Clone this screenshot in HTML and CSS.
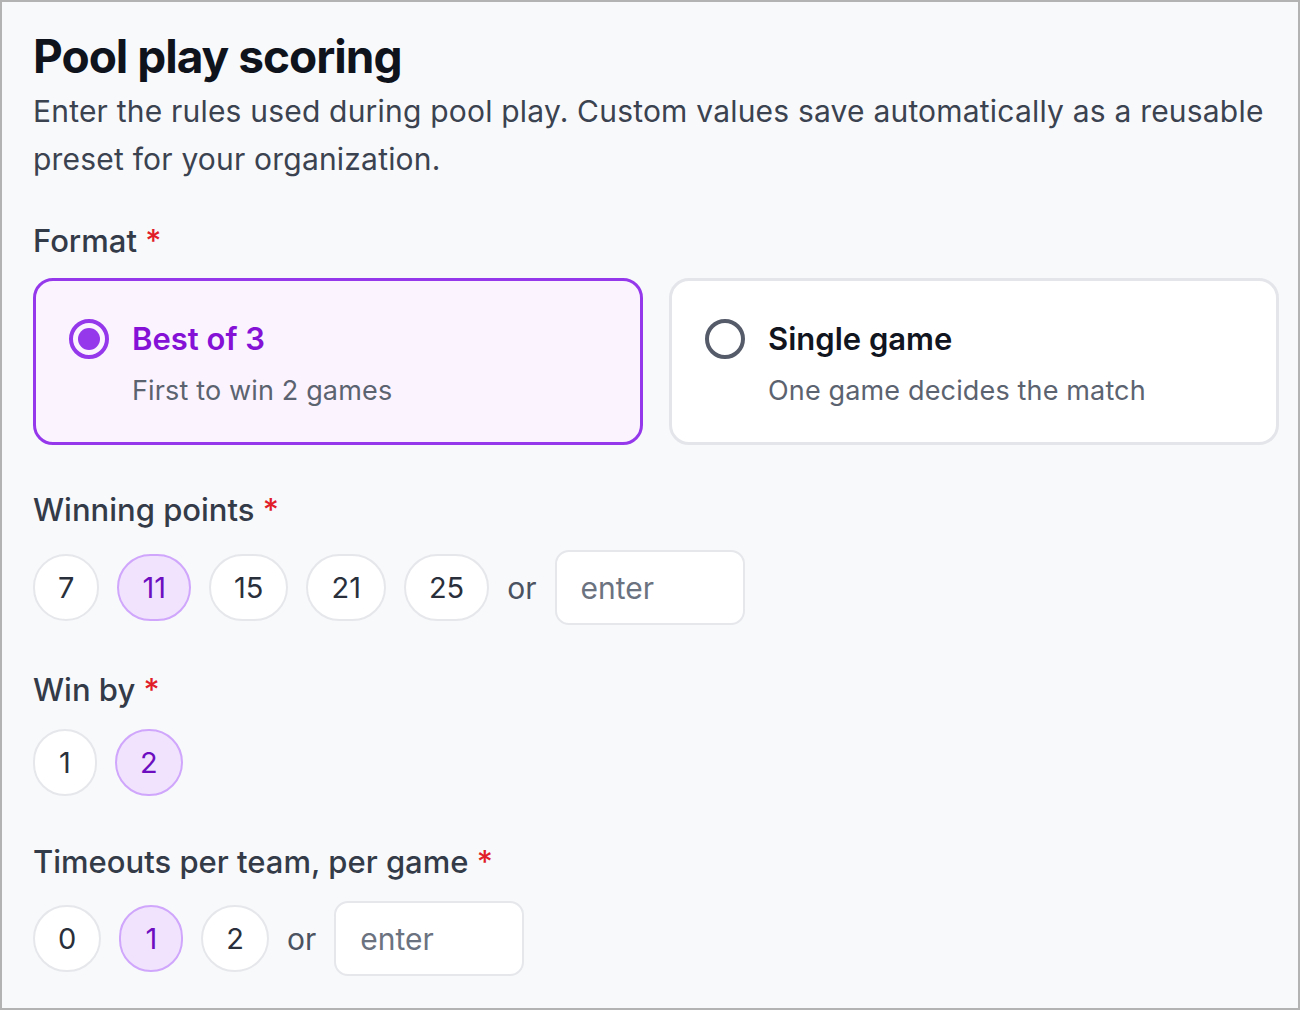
FILE: index.html
```html
<!DOCTYPE html>
<html lang="en">
<head>
<meta charset="utf-8">
<title>Pool play scoring</title>
<link rel="stylesheet" href="styles.css">
</head>
<body>
<div class="frame">
  <h1 class="title">Pool play scoring</h1>
  <p class="desc">Enter the rules used during pool play. Custom values save automatically as a reusable preset for your organization.</p>

  <div class="field field-format">
    <div class="label">Format <span class="req">*</span></div>
    <div class="cards">
      <div class="card selected">
        <span class="radio on"><span class="dot"></span></span>
        <div class="card-text">
          <div class="card-title">Best of 3</div>
          <div class="card-sub">First to win 2 games</div>
        </div>
      </div>
      <div class="card">
        <span class="radio"></span>
        <div class="card-text">
          <div class="card-title">Single game</div>
          <div class="card-sub">One game decides the match</div>
        </div>
      </div>
    </div>
  </div>

  <div class="field field-points">
    <div class="label">Winning points <span class="req">*</span></div>
    <div class="pills">
      <span class="pill">7</span>
      <span class="pill active">11</span>
      <span class="pill">15</span>
      <span class="pill">21</span>
      <span class="pill">25</span>
      <span class="or">or</span>
      <input class="entry" type="text" placeholder="enter">
    </div>
  </div>

  <div class="field field-winby">
    <div class="label">Win by <span class="req">*</span></div>
    <div class="pills">
      <span class="pill">1</span>
      <span class="pill active">2</span>
    </div>
  </div>

  <div class="field field-timeouts">
    <div class="label">Timeouts per team, per game <span class="req">*</span></div>
    <div class="pills">
      <span class="pill">0</span>
      <span class="pill active">1</span>
      <span class="pill">2</span>
      <span class="or">or</span>
      <input class="entry" type="text" placeholder="enter">
    </div>
  </div>
</div>
</body>
</html>
```

FILE: styles.css
```css
html, body {
  margin: 0;
  padding: 0;
}
body {
  font-family: Inter, "Noto Sans", "Liberation Sans", sans-serif;
  background: #ffffff;
}
.frame {
  box-sizing: border-box;
  width: 1300px;
  height: 1010px;
  border: 2px solid #b3b3b3;
  background: #f8f9fb;
  padding: 26px 19px 0 31px;
  overflow: hidden;
}
.title {
  margin: 0;
  font-size: 46px;
  line-height: 56px;
  font-weight: 700;
  color: #0f131c;
  letter-spacing: -1px;
}
.desc {
  margin: 3px 0 0;
  font-size: 30px;
  line-height: 48px;
  color: #3b4250;
  letter-spacing: 0.2px;
}
.label {
  font-size: 31px;
  line-height: 40px;
  color: #343b48;
  font-weight: 500;
}
.req {
  color: #e11d2a;
}
.field-format {
  margin-top: 38px;
}
.cards {
  margin-top: 17px;
  display: grid;
  grid-template-columns: 1fr 1fr;
  gap: 26px;
}
.card {
  box-sizing: border-box;
  height: 167px;
  border: 3px solid #e3e5ea;
  border-radius: 20px;
  background: #ffffff;
  display: flex;
  align-items: flex-start;
  gap: 23px;
  padding: 36px 30px 0 33px;
}
.card.selected {
  border-color: #9538ec;
  background: #fbf4fe;
}
.radio {
  flex: none;
  box-sizing: border-box;
  width: 40px;
  height: 40px;
  border-radius: 50%;
  border: 4px solid #565b6a;
  display: flex;
  align-items: center;
  justify-content: center;
  margin-top: 2px;
}
.radio.on {
  border-color: #9538ec;
}
.radio .dot {
  width: 22px;
  height: 22px;
  border-radius: 50%;
  background: #9538ec;
}
.card-title {
  font-size: 31px;
  line-height: 44px;
  font-weight: 600;
  color: #101520;
}
.card.selected .card-title {
  color: #8511d6;
}
.card-sub {
  margin-top: 12px;
  font-size: 27px;
  line-height: 36px;
  color: #5c6370;
  letter-spacing: 0.15px;
}
.field-points {
  margin-top: 45px;
}
.field-winby {
  margin-top: 45px;
}
.field-timeouts {
  margin-top: 46px;
}
.pills {
  margin-top: 20px;
  display: flex;
  align-items: center;
  gap: 18px;
}
.field-winby .pills {
  margin-top: 19px;
}
.field-timeouts .pills {
  margin-top: 19px;
}
.pill {
  box-sizing: border-box;
  height: 67px;
  min-width: 64px;
  padding: 0 23px;
  border-radius: 34px;
  border: 2px solid #e5e7eb;
  background: #ffffff;
  display: flex;
  align-items: center;
  justify-content: center;
  font-size: 29px;
  color: #2a303b;
}
.pill.active {
  background: #f1e3fd;
  border-color: #cfa6fb;
  color: #6d0fc0;
}
.or {
  font-size: 30px;
  color: #4b5260;
}
.entry {
  box-sizing: border-box;
  width: 190px;
  height: 75px;
  border: 2px solid #e5e7eb;
  border-radius: 14px;
  background: #ffffff;
  padding: 0 24px;
  font-family: inherit;
  font-size: 30px;
  color: #2a303b;
  outline: none;
}
.entry::placeholder {
  color: #6b7280;
}
```
